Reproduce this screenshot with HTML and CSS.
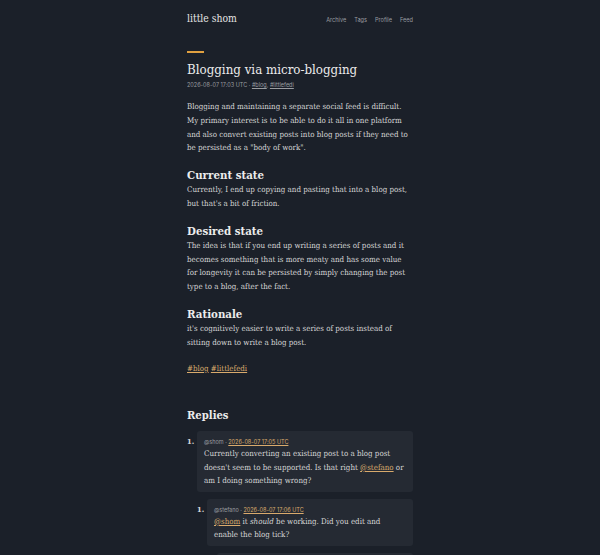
FILE: index.html
```html
<!DOCTYPE html>
<html lang="en">
<head>
<meta charset="utf-8">
<title>Blogging via micro-blogging</title>
<link rel="stylesheet" href="styles.css">
</head>
<body>
<div class="page">
  <header class="site-header">
    <a class="brand" href="#">little shom</a>
    <nav class="nav">
      <a href="#">Archive</a>
      <a href="#">Tags</a>
      <a href="#">Profile</a>
      <a href="#">Feed</a>
    </nav>
  </header>

  <article class="post">
    <div class="accent"></div>
    <h1 class="title">Blogging via micro-blogging</h1>
    <div class="meta">2026-08-07 17:03 UTC · <a href="#">#blog</a>, <a href="#">#littlefedi</a></div>

    <div class="body">
      <p>Blogging and maintaining a separate social feed is difficult. My primary interest is to be able to do it all in one platform and also convert existing posts into blog posts if they need to be persisted as a "body of work".</p>
      <h2>Current state</h2>
      <p>Currently, I end up copying and pasting that into a blog post, but that's a bit of friction.</p>
      <h2>Desired state</h2>
      <p>The idea is that if you end up writing a series of posts and it becomes something that is more meaty and has some value for longevity it can be persisted by simply changing the post type to a blog, after the fact.</p>
      <h2>Rationale</h2>
      <p>it's cognitively easier to write a series of posts instead of sitting down to write a blog post.</p>
      <p class="tags"><a href="#">#blog</a> <a href="#">#littlefedi</a></p>
    </div>
  </article>

  <section class="replies">
    <h2 class="replies-title">Replies</h2>
    <ol class="reply-list">
      <li>
        <div class="reply">
          <div class="reply-meta">@shom · <a href="#">2026-08-07 17:05 UTC</a></div>
          <p>Currently converting an existing post to a blog post doesn't seem to be supported. Is that right <a href="#">@stefano</a> or am I doing something wrong?</p>
        </div>
        <ol class="reply-list">
          <li>
            <div class="reply">
              <div class="reply-meta">@stefano · <a href="#">2026-08-07 17:06 UTC</a></div>
              <p><a href="#">@shom</a> it <em>should</em> be working. Did you edit and enable the blog tick?</p>
            </div>
            <ol class="reply-list nested">
              <li>
                <div class="reply">
                  <div class="reply-meta">@shom · <a href="#">2026-08-07 17:08 UTC</a></div>
                  <p>Yes, I did.</p>
                </div>
              </li>
            </ol>
          </li>
        </ol>
      </li>
    </ol>
  </section>
</div>
</body>
</html>
```

FILE: styles.css
```css
html, body {
  margin: 0;
  padding: 0;
  background: #1b2029;
}
body {
  color: #d6d6d6;
  font-family: "DejaVu Serif Condensed", "DejaVu Serif", serif;
  font-stretch: semi-condensed;
}
a { color: inherit; }
.page {
  width: 226px;
  margin: 0 auto;
}
.site-header {
  display: flex;
  justify-content: space-between;
  align-items: center;
  padding-top: 10px;
  height: 16px;
}
.brand {
  font-size: 10.3px;
  text-decoration: none;
  color: #e6e6e6;
}
.nav {
  display: flex;
  gap: 8px;
  font-family: Inter, "Noto Sans", sans-serif;
  font-stretch: normal;
  font-size: 5.6px;
  padding-top: 4px;
}
.nav a {
  color: #9a9ca0;
  text-decoration: none;
}
.post {
  padding-top: 25px;
}
.accent {
  width: 17px;
  height: 2px;
  background: #e0a040;
}
.title {
  margin: 7px 0 0;
  font-size: 13.2px;
  font-weight: normal;
  color: #ececec;
  line-height: 19px;
}
.meta {
  font-family: Inter, "Noto Sans", sans-serif;
  font-stretch: normal;
  font-size: 5.5px;
  color: #9a9ca0;
  margin-top: 2px;
  line-height: 9px;
}
.meta a { color: #9a9ca0; }
.body {
  margin-top: 10px;
  font-size: 7.9px;
  line-height: 13.8px;
}
.body p {
  margin: 0 0 12px;
}
.body h2 {
  font-size: 11.4px;
  margin: 0;
  line-height: 16px;
  color: #ececec;
}
.tags a { color: #d9aa6c; }
.replies {
  margin-top: 32px;
}
.replies-title {
  font-size: 11.2px;
  margin: 0 0 8px;
  line-height: 16px;
  color: #ececec;
}
.reply-list {
  margin: 0;
  padding-left: 10px;
  font-size: 7.9px;
}
.reply-list li::marker {
  font-weight: bold;
  font-size: 8.2px;
}
.reply {
  background: #252a33;
  border-radius: 3px;
  padding: 6px 6px 4px 7px;
  margin-bottom: 7px;
}
.reply-list .reply-list .reply {
  padding-right: 12px;
}
.reply-meta {
  font-family: Inter, "Noto Sans", sans-serif;
  font-stretch: normal;
  font-size: 5.5px;
  color: #9a9ca0;
  line-height: 10px;
}
.reply-meta a { color: #d9aa6c; }
.reply p {
  margin: 0;
  line-height: 13.5px;
}
.reply p a { color: #d9aa6c; }
```
